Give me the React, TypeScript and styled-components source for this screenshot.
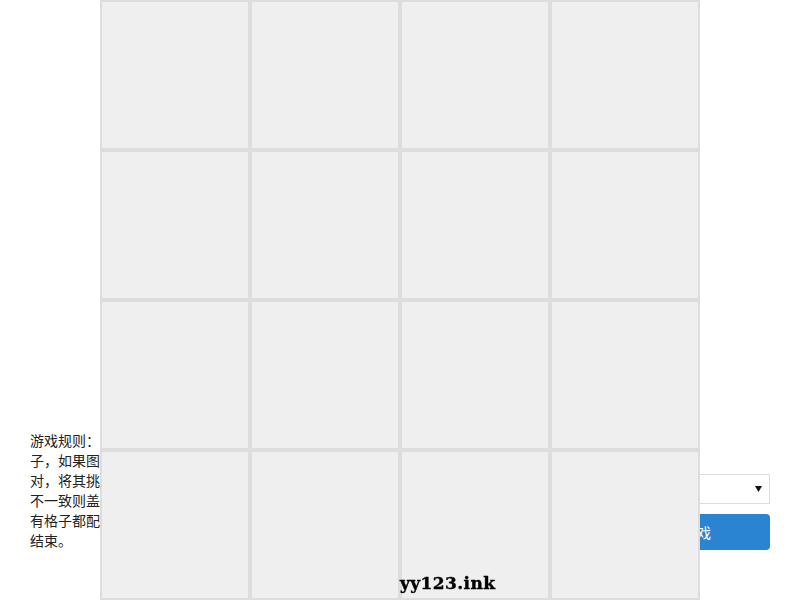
import styled, { createGlobalStyle } from "styled-components";

const GlobalStyle = createGlobalStyle`
  html, body {
    margin: 0;
    padding: 0;
    background: #fff;
  }
  body {
    font-family: "Noto Sans CJK SC", "Liberation Sans", sans-serif;
    overflow: hidden;
  }
`;

const RULES =
  "游戏规则：点击翻开两个格子，如果图案一致则可以配对，将其挑出；若两个图案不一致则盖回原处，直到所有格子都配对成功时，游戏结束。";

export default function App() {
  const cells = Array.from({ length: 16 }, (_, i) => i);
  return (
    <>
      <GlobalStyle />
      <Page>
        <LeftPanel>
          <Rules>{RULES}</Rules>
        </LeftPanel>
        <Board>
          {cells.map((i) => (
            <Cell key={i} />
          ))}
        </Board>
        <RightPanel>
          <Controls>
            <SelectBox>
              <span>4 × 4</span>
              <svg width="7" height="6" viewBox="0 0 7 6">
                <path d="M0 0h7L3.5 6z" fill="#111" />
              </svg>
            </SelectBox>
            <StartButton>开始游戏</StartButton>
          </Controls>
        </RightPanel>
      </Page>
      <Watermark>yy123.ink</Watermark>
    </>
  );
}

const Page = styled.div`
  display: flex;
  width: 800px;
  height: 600px;
  box-sizing: border-box;
  padding: 0 30px;
`;

const LeftPanel = styled.div`
  width: 70px;
  flex-shrink: 0;
  align-self: flex-end;
  padding-bottom: 50px;
`;

const Rules = styled.p`
  margin: 0;
  width: 168px;
  color: #222;
  font-size: 14px;
  line-height: 20px;
`;

const Board = styled.div`
  position: relative;
  z-index: 1;
  flex-shrink: 0;
  display: grid;
  grid-template-columns: repeat(4, 150px);
  grid-template-rows: repeat(4, 150px);
  width: 600px;
  height: 600px;
`;

const Cell = styled.div`
  box-sizing: border-box;
  border: 2px solid #dddddd;
  background: #efefef;
`;

const RightPanel = styled.div`
  width: 70px;
  flex-shrink: 0;
  align-self: flex-end;
  display: flex;
  justify-content: flex-end;
  padding-bottom: 50px;
`;

const Controls = styled.div`
  width: 174px;
  flex-shrink: 0;
  display: flex;
  flex-direction: column;
  gap: 10px;
`;

const SelectBox = styled.div`
  box-sizing: border-box;
  height: 30px;
  border: 1px solid #dddddd;
  display: flex;
  align-items: center;
  justify-content: space-between;
  padding: 0 7px 0 10px;
  font-size: 14px;
  color: #333;
  background: #fff;
`;

const StartButton = styled.button`
  height: 36px;
  border: none;
  border-radius: 4px;
  background: #2b84d2;
  color: #fff;
  font-family: "Noto Sans CJK SC", "Liberation Sans", sans-serif;
  font-size: 14px;
  padding: 0;
`;

const Watermark = styled.div`
  position: fixed;
  left: 400px;
  bottom: 7px;
  z-index: 2;
  font-family: "DejaVu Serif", serif;
  font-weight: 900;
  font-size: 17px;
  letter-spacing: 0.4px;
  line-height: 20px;
  color: #000;
  -webkit-text-stroke: 0.4px #000;
`;
